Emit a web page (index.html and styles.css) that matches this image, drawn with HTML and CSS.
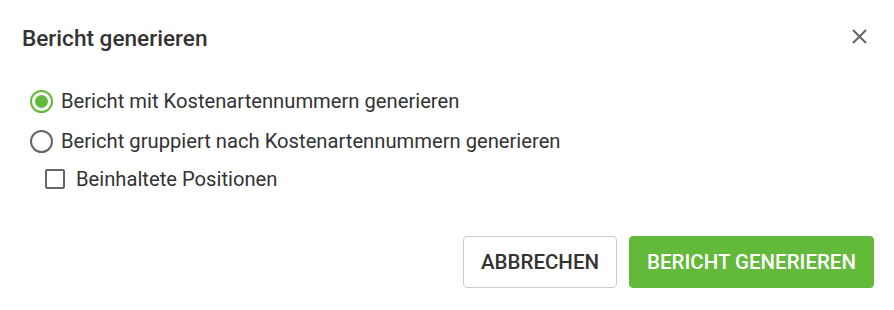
FILE: index.html
```html
<!DOCTYPE html>
<html lang="de">
<head>
<meta charset="utf-8">
<link rel="stylesheet" href="styles.css">
</head>
<body>
<div class="dialog">
  <div class="header">
    <h2 class="title">Bericht generieren</h2>
    <button class="close" aria-label="Schließen">
      <svg width="15" height="15" viewBox="0 0 15 15"><path d="M1 1L14 14M14 1L1 14" stroke="#666" stroke-width="2" fill="none"/></svg>
    </button>
  </div>
  <div class="content">
    <label class="option">
      <span class="radio checked"></span>
      <span class="label">Bericht mit Kostenartennummern generieren</span>
    </label>
    <label class="option">
      <span class="radio"></span>
      <span class="label">Bericht gruppiert nach Kostenartennummern generieren</span>
    </label>
    <label class="option sub">
      <span class="checkbox"></span>
      <span class="label">Beinhaltete Positionen</span>
    </label>
  </div>
  <div class="actions">
    <button class="btn btn-outline">ABBRECHEN</button>
    <button class="btn btn-primary">BERICHT GENERIEREN</button>
  </div>
</div>
</body>
</html>
```
FILE: styles.css
```css
html, body {
  margin: 0;
  padding: 0;
  background: #fff;
}
body {
  font-family: Roboto, "Liberation Sans", sans-serif;
  color: #333;
}
.dialog {
  width: 894px;
  height: 310px;
  box-sizing: border-box;
  padding: 20px 20px 0 22px;
  display: flex;
  flex-direction: column;
}
.header {
  display: flex;
  align-items: center;
  justify-content: space-between;
  height: 36px;
}
.title {
  margin: 0;
  font-size: 22.6px;
  font-weight: 500;
  color: #333;
}
.close {
  border: 0;
  background: none;
  padding: 0;
  margin: 0 7px 4px 0;
  width: 15px;
  height: 15px;
  display: flex;
}
.content {
  display: flex;
  flex-direction: column;
  padding-top: 25px;
  padding-left: 8px;
}
.option {
  display: flex;
  align-items: center;
  height: 40px;
  font-size: 20.2px;
  color: #333;
}
.radio {
  width: 23px;
  height: 23px;
  box-sizing: border-box;
  border: 2px solid #666;
  border-radius: 50%;
  margin-right: 8px;
  display: flex;
  align-items: center;
  justify-content: center;
}
.radio.checked {
  border-color: #63b93a;
}
.radio.checked::after {
  content: "";
  width: 13px;
  height: 13px;
  border-radius: 50%;
  background: #63b93a;
}
.option.sub {
  padding-left: 15px;
  height: 35px;
}
.checkbox {
  width: 20px;
  height: 20px;
  box-sizing: border-box;
  border: 2px solid #666;
  border-radius: 2px;
  margin-right: 11px;
}
.actions {
  margin-top: auto;
  margin-bottom: 22px;
  display: flex;
  justify-content: flex-end;
  gap: 12px;
}
.btn {
  height: 52px;
  padding: 0 17px;
  font-family: Roboto, "Liberation Sans", sans-serif;
  font-size: 20.5px;
  font-weight: 500;
  border-radius: 4px;
  cursor: pointer;
}
.btn-outline {
  background: #fff;
  border: 1px solid #ccc;
  color: #333;
}
.btn-primary {
  background: #63b93a;
  border: 1px solid #63b93a;
  color: #fff;
}
```
